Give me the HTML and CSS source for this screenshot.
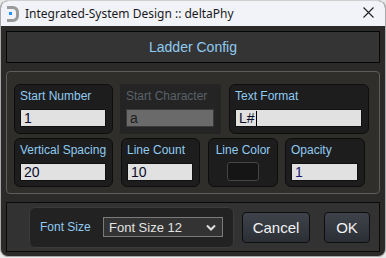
FILE: index.html
```html
<!DOCTYPE html>
<html lang="en">
<head>
    <meta charset="UTF-8">
    <title>Ladder Config</title>
    <link rel="stylesheet" href="styles.css">
</head>
<body>
    <div class="window">
        <div class="titlebar">
            <svg class="app-icon" width="14" height="16" viewBox="0 0 14 16">
                <path d="M2 1.5h6a4.5 4.5 0 0 1 4.5 4.5v4a4.5 4.5 0 0 1-4.5 4.5H2" fill="none" stroke="#9a9a9a" stroke-width="3"/>
                <rect x="4" y="6" width="3" height="3" fill="#1e90ff"/>
            </svg>
            <span class="title">Integrated-System Design :: deltaPhy</span>
            <svg class="close" width="11" height="11" viewBox="0 0 11 11">
                <path d="M0.5 0.5l10 10M10.5 0.5l-10 10" stroke="#222" stroke-width="1.1"/>
            </svg>
        </div>
        <div class="body">
            <div class="header">Ladder Config</div>
            <div class="panel">
                <div class="row">
                    <div class="card w99">
                        <label>Start Number</label>
                        <div class="field">1</div>
                    </div>
                    <div class="card disabled w101">
                        <label>Start Character</label>
                        <div class="field">a</div>
                    </div>
                    <div class="card w140 ml1">
                        <label>Text Format</label>
                        <div class="field">L#<span class="caret"></span></div>
                    </div>
                </div>
                <div class="row row2">
                    <div class="card w99">
                        <label>Vertical Spacing</label>
                        <div class="field">20</div>
                    </div>
                    <div class="card w79 ml1">
                        <label>Line Count</label>
                        <div class="field">10</div>
                    </div>
                    <div class="card w70 ml1 center">
                        <label>Line Color</label>
                        <div class="swatch"></div>
                    </div>
                    <div class="card w80">
                        <label>Opacity</label>
                        <div class="field navy">1</div>
                    </div>
                </div>
            </div>
            <div class="footer">
                <div class="group">
                    <span class="group-label">Font Size</span>
                    <div class="select">
                        <span>Font Size 12</span>
                        <svg width="10" height="7" viewBox="0 0 10 7">
                            <path d="M1 1.5l4 4 4-4" fill="none" stroke="#e0e0e0" stroke-width="2"/>
                        </svg>
                    </div>
                </div>
                <button class="btn cancel">Cancel</button>
                <button class="btn ok">OK</button>
            </div>
        </div>
    </div>
</body>
</html>
```
FILE: styles.css
```css
body {
    margin: 0;
    width: 386px;
    height: 258px;
    background: #e9e9e9;
    font-family: 'Liberation Sans', Arial, sans-serif;
    overflow: hidden;
}
.window {
    width: 386px;
    height: 257px;
    border-radius: 8px;
    overflow: hidden;
    background: #2b2a28;
    box-sizing: border-box;
    border: 1px solid #a9a9a9;
    border-top-color: #d0d0d0;
}
.titlebar {
    height: 25px;
    background: #f1f3f9;
    display: flex;
    align-items: center;
    padding: 0 0 0 4px;
}
.app-icon {
    margin-right: 6px;
}
.title {
    font-family: 'Noto Sans', sans-serif;
    font-size: 12px;
    color: #1a1a1a;
    flex: 1;
    padding-bottom: 1px;
}
.close {
    margin-right: 11px;
    margin-bottom: 2px;
}
.body {
    padding: 5px 5px 0 5px;
}
.header {
    height: 30px;
    border: 1px solid #060606;
    background: #343434;
    color: #8fcbf2;
    font-size: 14px;
    display: flex;
    align-items: center;
    justify-content: center;
}
.panel {
    margin-top: 8px;
    height: 109px;
    border: 1px solid #5e5d5a;
    border-radius: 4px;
    background: #2f2e2b;
    padding: 12px 0 0 7px;
}
.row {
    display: flex;
    gap: 7px;
    height: 50px;
}
.row2 {
    margin-top: 4px;
    height: 49px;
}
.card {
    box-sizing: border-box;
    background: #1d1d1d;
    border: 1px solid #0d0d0d;
    border-radius: 6px;
    padding: 4px 0 0 5px;
    display: flex;
    flex-direction: column;
}
.card label {
    font-size: 12px;
    color: #8fcbf2;
    line-height: 14px;
    height: 20px;
}
.card.disabled {
    background: #242424;
    border-color: #242424;
    border-radius: 2px;
}
.card.disabled label {
    color: #5a6169;
}
.card.disabled .field {
    background: #6a6a6a;
    color: #1e1e1e;
    border-color: #3a3a3a;
}
.card.center {
    align-items: center;
    padding-left: 0;
}
.w99 { width: 99px; }
.w101 { width: 101px; }
.w140 { width: 140px; }
.w79 { width: 79px; }
.w70 { width: 70px; }
.w80 { width: 80px; }
.ml1 { margin-left: 1px; }
.field {
    box-sizing: border-box;
    width: calc(100% - 6px);
    height: 18px;
    background: #e1e1e1;
    border: 1px solid #111;
    color: #0b0b2a;
    font-size: 14px;
    line-height: 16px;
    padding-left: 3px;
    display: flex;
    align-items: center;
}
.field.navy {
    color: #1a1a6e;
}
.caret {
    display: inline-block;
    width: 1px;
    height: 15px;
    background: #000;
    margin-left: 1px;
}
.swatch {
    width: 32px;
    height: 19px;
    box-sizing: border-box;
    background: #151515;
    border: 1px solid #454545;
    border-radius: 3px;
    margin-top: -1px;
}
.footer {
    margin-top: 8px;
    height: 48px;
    border: 1px solid #0a0a0a;
    background: #323232;
    display: flex;
    align-items: center;
    padding-left: 22px;
}
.group {
    box-sizing: border-box;
    width: 205px;
    height: 41px;
    background: #222222;
    border: 1px solid #3b3b3b;
    border-radius: 6px;
    display: flex;
    align-items: center;
    padding-left: 10px;
}
.group-label {
    font-size: 12px;
    color: #8fcbf2;
    width: 63px;
}
.select {
    box-sizing: border-box;
    width: 120px;
    height: 20px;
    background: #333;
    border: 1px solid #7a7a7a;
    display: flex;
    align-items: center;
    justify-content: space-between;
    padding: 0 6px 0 5px;
    color: #e2e2e2;
    font-size: 13px;
}
.btn {
    box-sizing: border-box;
    height: 31px;
    border: 1px solid #0e0e0e;
    border-radius: 4px;
    background: linear-gradient(#3e434b, #2b2f35);
    color: #f2f2f2;
    font-family: 'Liberation Sans', Arial, sans-serif;
    font-size: 15px;
    padding: 0;
}
.cancel {
    width: 68px;
    margin-left: 8px;
}
.ok {
    width: 46px;
    margin-left: 14px;
}
```
